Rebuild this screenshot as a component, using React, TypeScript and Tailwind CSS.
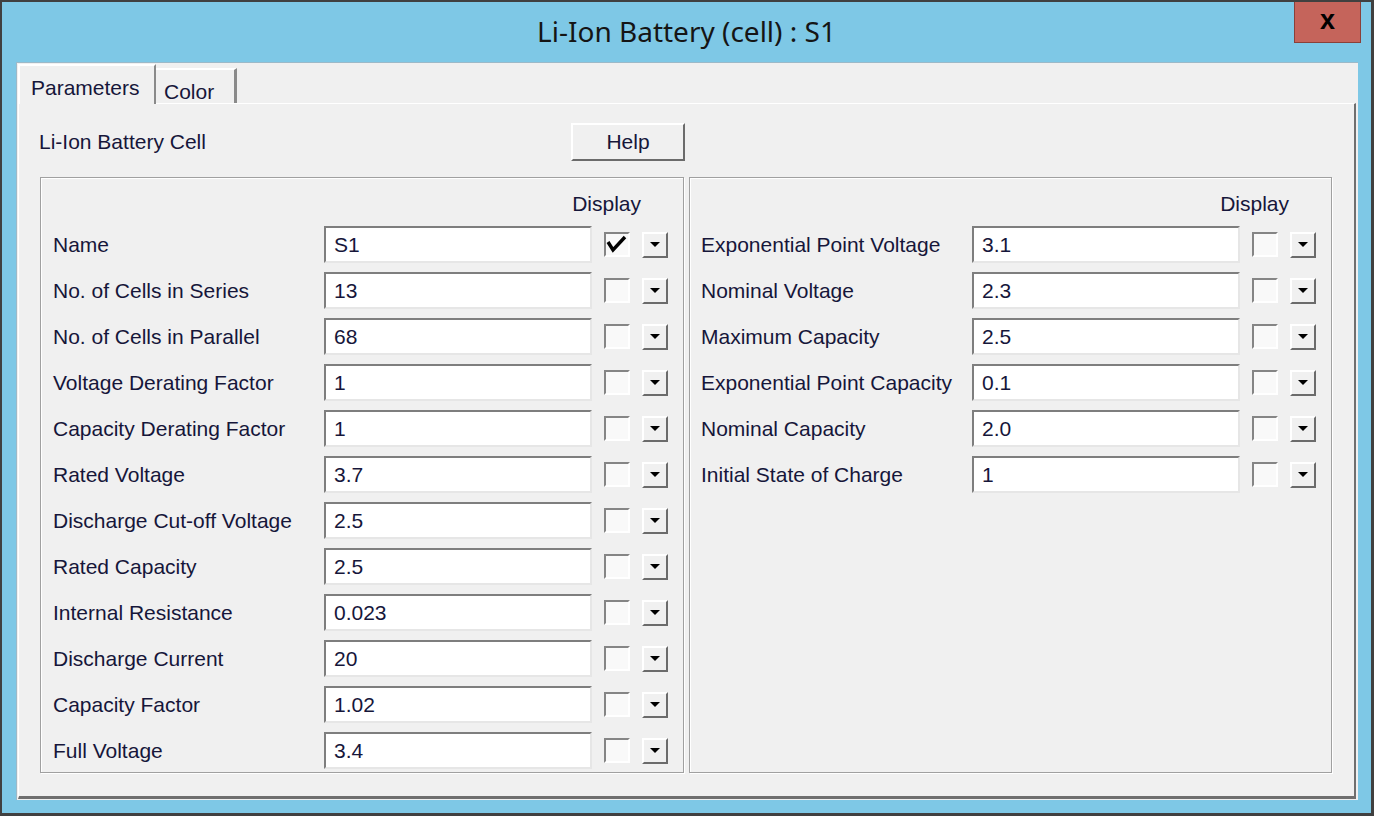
import React from 'react';

interface Param {
  label: string;
  value: string;
  shown?: boolean;
}

const leftParams: Param[] = [
  { label: 'Name', value: 'S1', shown: true },
  { label: 'No. of Cells in Series', value: '13' },
  { label: 'No. of Cells in Parallel', value: '68' },
  { label: 'Voltage Derating Factor', value: '1' },
  { label: 'Capacity Derating Factor', value: '1' },
  { label: 'Rated Voltage', value: '3.7' },
  { label: 'Discharge Cut-off Voltage', value: '2.5' },
  { label: 'Rated Capacity', value: '2.5' },
  { label: 'Internal Resistance', value: '0.023' },
  { label: 'Discharge Current', value: '20' },
  { label: 'Capacity Factor', value: '1.02' },
  { label: 'Full Voltage', value: '3.4' }
];

const rightParams: Param[] = [
  { label: 'Exponential Point Voltage', value: '3.1' },
  { label: 'Nominal Voltage', value: '2.3' },
  { label: 'Maximum Capacity', value: '2.5' },
  { label: 'Exponential Point Capacity', value: '0.1' },
  { label: 'Nominal Capacity', value: '2.0' },
  { label: 'Initial State of Charge', value: '1' }
];

const CheckBox: React.FC<{ checked?: boolean }> = ({ checked }) => (
  <div className="ml-[12px] w-[26px] h-[25px] border-2 border-t-[#858585] border-l-[#858585] border-b-white border-r-white bg-[#f9f9f9] flex items-center justify-center">
    {checked && (
      <svg width="22" height="21" viewBox="0 0 22 21">
        <path d="M2 8 L7 16 L19 3" stroke="#000" strokeWidth="3.4" fill="none" />
      </svg>
    )}
  </div>
);

const DropButton: React.FC = () => (
  <div className="ml-[12px] w-[26px] h-[26px] bg-[#f0f0f0] border-2 border-t-white border-l-white border-b-[#6b6b6b] border-r-[#6b6b6b] flex items-center justify-center">
    <svg width="10" height="6" viewBox="0 0 10 6">
      <path d="M0 0 H10 L5 5 Z" fill="#000" />
    </svg>
  </div>
);

const ParamRow: React.FC<{ param: Param }> = ({ param }) => (
  <div className="flex items-center h-[37px]">
    <span className="w-[271px] whitespace-nowrap">{param.label}</span>
    <div className="w-[268px] h-[37px] bg-white border-2 border-t-[#7e7e7e] border-l-[#7e7e7e] border-b-[#e6e6e6] border-r-[#e6e6e6] pl-2 flex items-center">
      {param.value}
    </div>
    <CheckBox checked={param.shown} />
    <DropButton />
  </div>
);

const GroupBox: React.FC<{ params: Param[]; width: string; padLeft: string }> = ({
  params,
  width,
  padLeft
}) => (
  <div
    className={`${width} ${padLeft} h-[596px] pt-[14px] border border-[#a0a0a0] shadow-[inset_1px_1px_0_#fff,1px_1px_0_#fff]`}
  >
    <div className="w-[588px] h-[24px] leading-[24px] text-right mb-[10px]">Display</div>
    <div className="flex flex-col gap-[9px]">
      {params.map((p) => (
        <ParamRow key={p.label} param={p} />
      ))}
    </div>
  </div>
);

export default function App() {
  return (
    <div className="w-[1374px] h-[816px] bg-[#7ec8e6] border-t-2 border-l-2 border-r-[3px] border-b-[3px] border-[#404040] flex flex-col font-['Liberation_Sans',Arial,sans-serif] text-[21px] text-[#16163a]">
      {/* title bar */}
      <div className="relative h-[60px] flex items-center justify-center">
        <span className="font-['Noto_Sans',sans-serif] text-[28px] text-[#151515] pb-[2px]">
          Li-Ion Battery (cell) : S1
        </span>
        <div className="absolute left-[1292px] top-0 w-[67px] h-[41px] bg-[#c5645b] border border-t-0 border-[#8a4039] flex items-center justify-center">
          <span className="text-[27px] font-bold text-black leading-none pb-[4px]">x</span>
        </div>
      </div>

      {/* client area */}
      <div className="ml-[14px] w-[1342px] h-[738px] bg-[#f0f0f0] border-t border-l border-[#9cb9c8] flex flex-col">
        {/* tabs */}
        <div className="h-[40px] pl-[1px] flex items-end">
          <div className="relative z-10 -mb-px h-[40px] w-[138px] bg-[#f0f0f0] border-t-2 border-l-2 border-t-white border-l-white border-r-2 border-r-[#8a8a8a] pl-[11px] pt-[6px]">
            Parameters
          </div>
          <div className="h-[35px] w-[81px] bg-[#f0f0f0] border-t-2 border-t-white border-r-[3px] border-r-[#8a8a8a] pl-[8px] pt-[6px]">
            Color
          </div>
        </div>

        {/* tab panel */}
        <div className="ml-[1px] w-[1338px] h-[696px] border-t border-l border-white border-r-2 border-b-[3px] border-r-[#6f6f6f] border-b-[#6f6f6f] pl-[21px] pt-[19px]">
          <div className="flex items-center h-[38px]">
            <span className="w-[532px] -ml-px">Li-Ion Battery Cell</span>
            <div className="w-[114px] h-[38px] bg-[#f0f0f0] border-2 border-t-white border-l-white border-b-[#6b6b6b] border-r-[#6b6b6b] flex items-center justify-center">
              Help
            </div>
          </div>
          <div className="mt-[16px] flex gap-[5px]">
            <GroupBox params={leftParams} width="w-[644px]" padLeft="pl-[12px]" />
            <GroupBox params={rightParams} width="w-[643px]" padLeft="pl-[11px]" />
          </div>
        </div>
      </div>
    </div>
  );
}
